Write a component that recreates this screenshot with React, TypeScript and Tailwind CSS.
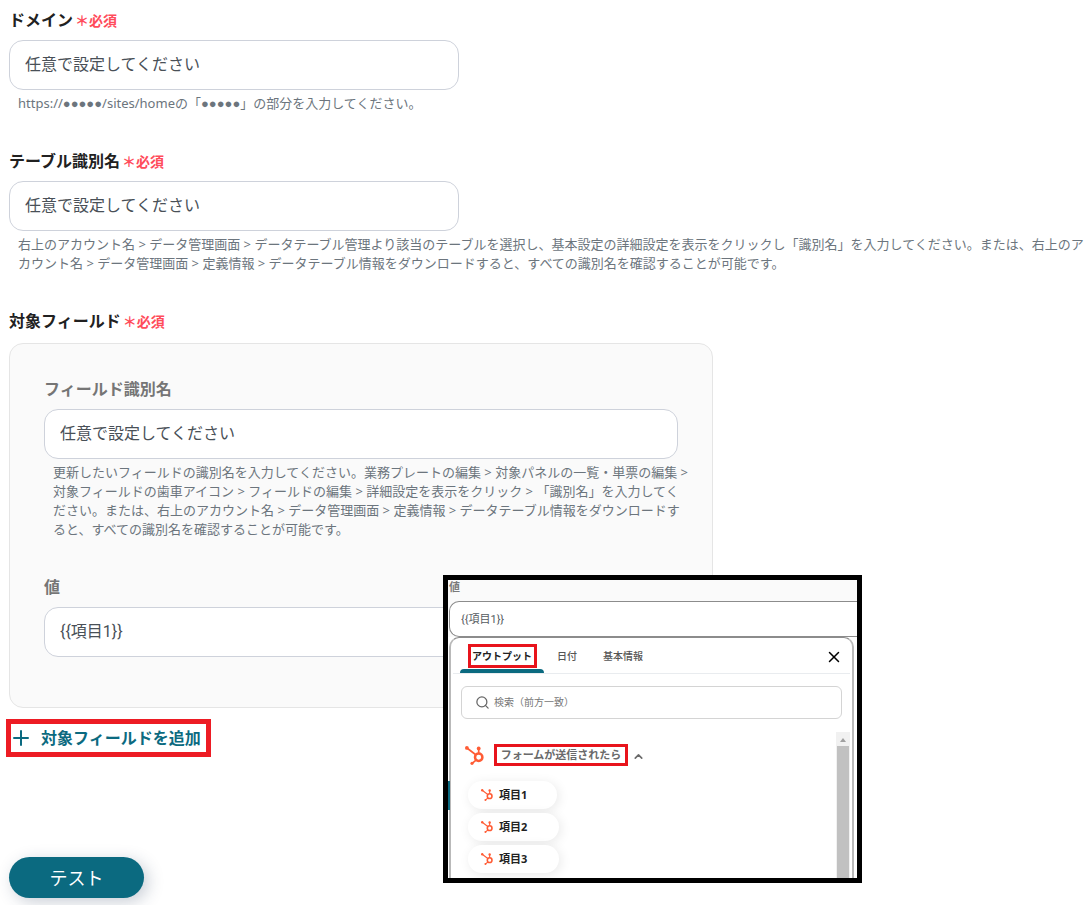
import { useState } from "react";
import type { ReactNode } from "react";
import { ChevronUp, Plus, Search, X } from "lucide-react";

const inputClass =
  "block h-[50px] w-full rounded-[14px] border border-[#ced2db] bg-white px-[15px] pb-1 font-['Roboto','Noto_Sans_CJK_JP',sans-serif] text-base text-[#495057] outline-none focus:border-[#0b6a80]";

function HubspotIcon({ size }: { size: number }) {
  return (
    <svg width={size} height={size} viewBox="0 0 19 19" fill="none" stroke="#ff5c35" className="shrink-0" aria-hidden="true">
      <circle cx="13.700" cy="11.300" r="3.700" strokeWidth="2.500" />
      <path d="M1.900 2 10.800 8.700M13.700 2.600V7.500M11 14.200 7.200 17.300" strokeWidth="1.700" />
      <g fill="#ff5c35" stroke="none">
        <circle cx="1.900" cy="1.900" r="1.900" />
        <circle cx="13.700" cy="2.400" r="1.900" />
        <circle cx="7" cy="17.300" r="1.600" />
      </g>
    </svg>
  );
}

function Required() {
  return <span className="ml-0.5 text-sm font-bold text-[#ff4c5b]">＊必須</span>;
}

function Helper({ id, children }: { id: string; children: ReactNode }) {
  return (
    <p id={id} className="mt-1 pl-[9px] text-[13px] leading-[19px] text-[#6c757d]">
      {children}
    </p>
  );
}

function Dots() {
  return <span className="font-['Liberation_Sans']">●●●●●</span>;
}

const outputs = ["項目1", "項目2", "項目3"];
const tabs = ["アウトプット", "日付", "基本情報"];

function OutputPicker() {
  const [active, setActive] = useState(0);
  return (
    <aside className="absolute top-[232px] left-[434px] z-10 flex h-[308px] w-[419px] flex-col overflow-hidden border-5 border-black bg-white">
      <div className="shrink-0 bg-[#fafafa] pl-px">
        <label htmlFor="picker-value" className="block h-[21px] text-[11px] leading-[14px] font-bold text-[#7a7a7a]">
          値
        </label>
        <input
          id="picker-value"
          defaultValue="{{項目1}}"
          className="block h-9 w-full rounded-l-[10px] border border-r-0 border-[#8c8c8c] bg-white px-[11px] pb-0.5 font-['Roboto','Noto_Sans_CJK_JP',sans-serif] text-[11px] text-[#555b61] outline-none"
        />
      </div>
      <div className="mr-[3px] ml-px flex min-h-0 grow flex-col rounded-t-[10px] border-2 border-t border-b-0 border-[#b9b9b9] border-t-[#8c8c8c]">
        <div className="mx-0.5 flex h-9 shrink-0 items-stretch border-b border-[#e9ecef] px-[7px]" role="tablist">
          {tabs.map((tab, i) => (
            <button
              key={tab}
              role="tab"
              aria-selected={active === i}
              onClick={() => setActive(i)}
              className={
                active === i
                  ? "flex w-[84px] flex-col items-center justify-between pt-1.5 text-[10px] font-bold text-[#222]"
                  : "px-[13px] pt-0.5 text-[10px] font-medium text-[#555]"
              }
            >
              {active === i ? (
                <>
                  <span className="flex h-6 w-[69px] items-center justify-center border-3 border-[#e8141c] whitespace-nowrap">
                    {tab}
                  </span>
                  <span className="h-1 w-full rounded-t-sm bg-[#0b6a80]" />
                </>
              ) : (
                tab
              )}
            </button>
          ))}
          <button aria-label="閉じる" className="ml-auto pt-0.5 text-black">
            <X size={18} strokeWidth={2} />
          </button>
        </div>
        <div className="mx-2.5 mt-3 flex h-[33px] shrink-0 items-center gap-1 rounded-md border border-[#d4d4d4] px-[13px] text-[#666]">
          <Search size={15} strokeWidth={2} className="shrink-0" />
          <input
            aria-label="検索（前方一致）"
            placeholder="検索（前方一致）"
            className="min-w-0 grow text-[10px] outline-none placeholder:text-[#777]"
          />
        </div>
        <div className="mt-[13px] flex min-h-0 grow justify-between pl-3.5">
          <div className="pt-3">
            <button className="flex h-[22px] items-center text-[#6a6a6a]">
              <HubspotIcon size={19} />
              <span className="mr-1 ml-2.5 flex h-[22px] w-[134px] items-center justify-center border-3 border-[#e8141c] text-[11px] font-bold whitespace-nowrap">
                フォームが送信されたら
              </span>
              <ChevronUp size={13} strokeWidth={3} className="mt-0.5" />
            </button>
            <div className="mt-[15px] ml-[3px] flex flex-col items-start gap-1">
              {outputs.map((name) => (
                <button
                  key={name}
                  className="flex h-7 w-[91px] items-center gap-1.5 rounded-full bg-white pl-[13px] text-[11px] font-bold text-[#222] shadow-[2px_2px_12px_rgba(0,0,0,0.09)] first:w-[89px]"
                >
                  <HubspotIcon size={12} />
                  {name}
                </button>
              ))}
            </div>
          </div>
          <div className="mr-0.5 flex w-3.5 flex-col items-stretch bg-[#f1f1f1] px-px" aria-hidden="true">
            <svg viewBox="0 0 12 14" className="h-3.5 shrink-0" fill="#a0a0a0">
              <path d="M3 10h6L6 6z" />
            </svg>
            <span className="grow bg-[#c1c1c1]" />
          </div>
        </div>
      </div>
      <span className="absolute top-[201px] left-0 h-[29px] w-0.5 bg-[#0b6a80]" />
    </aside>
  );
}

export default function App() {
  return (
    <main className="bg-white pt-2 pb-[7px] pl-[9px] font-['Noto_Sans','Noto_Sans_CJK_JP',sans-serif]">
      <section>
        <label htmlFor="domain" className="block h-6 text-base leading-6 font-bold text-[#212121]">
          ドメイン
          <Required />
        </label>
        <div className="mt-2 max-w-[450px]">
          <input id="domain" aria-describedby="domain-help" defaultValue="任意で設定してください" className={inputClass} />
        </div>
        <Helper id="domain-help">
          https://<Dots />/sites/homeの「<Dots />」の部分を入力してください。
        </Helper>
      </section>

      <section className="mt-9">
        <label htmlFor="table" className="block h-6 text-base leading-6 font-bold text-[#212121]">
          テーブル識別名
          <Required />
        </label>
        <div className="mt-2 max-w-[450px]">
          <input id="table" aria-describedby="table-help" defaultValue="任意で設定してください" className={inputClass} />
        </div>
        <Helper id="table-help">
          右上のアカウント名 &gt; データ管理画面 &gt; データテーブル管理より該当のテーブルを選択し、基本設定の詳細設定を表示をクリックし「識別名」を入力してください。または、右上のアカウント名
          &gt; データ管理画面 &gt; 定義情報 &gt; データテーブル情報をダウンロードすると、すべての識別名を確認することが可能です。
        </Helper>
      </section>

      <section className="mt-9">
        <h2 className="h-6 text-base leading-6 font-bold text-[#212121]">
          対象フィールド
          <Required />
        </h2>
        <div className="relative mt-2.5">
          <div className="max-w-[704px] rounded-[14px] border border-[#e5e5e5] bg-[#fafafa] px-[34px] pt-[33px] pb-[50px]">
            <label htmlFor="field" className="block h-6 text-base leading-6 font-bold text-[#757575]">
              フィールド識別名
            </label>
            <div className="mt-2">
              <input id="field" aria-describedby="field-help" defaultValue="任意で設定してください" className={inputClass} />
            </div>
            <div className="-mr-4">
              <Helper id="field-help">
                更新したいフィールドの識別名を入力してください。業務プレートの編集 &gt; 対象パネルの一覧・単票の編集 &gt;
                <br />
                対象フィールドの歯車アイコン &gt; フィールドの編集 &gt; 詳細設定を表示をクリック &gt; 「識別名」を入力してく
                <br />
                ださい。または、右上のアカウント名 &gt; データ管理画面 &gt; 定義情報 &gt; データテーブル情報をダウンロードす
                <br />
                ると、すべての識別名を確認することが可能です。
              </Helper>
            </div>
            <label htmlFor="value" className="mt-9 block h-6 text-base leading-6 font-bold text-[#757575]">
              値
            </label>
            <div className="mt-2">
              <input id="value" defaultValue="{{項目1}}" className={inputClass} />
            </div>
          </div>
          <OutputPicker />
        </div>
        <button className="mt-[11px] -ml-[3px] flex h-[38px] w-[205px] items-center gap-2 border-5 border-[#ed1c24] text-base font-bold whitespace-nowrap text-[#0b6a80]">
          <Plus size={24} strokeWidth={2} className="-ml-0.5 shrink-0" />
          対象フィールドを追加
        </button>
      </section>

      <button className="mt-[100px] h-[41px] w-[135px] rounded-full bg-[#0b6a80] text-lg text-white shadow-[4px_4px_16px_rgba(40,60,90,0.25)]">
        テスト
      </button>
    </main>
  );
}
